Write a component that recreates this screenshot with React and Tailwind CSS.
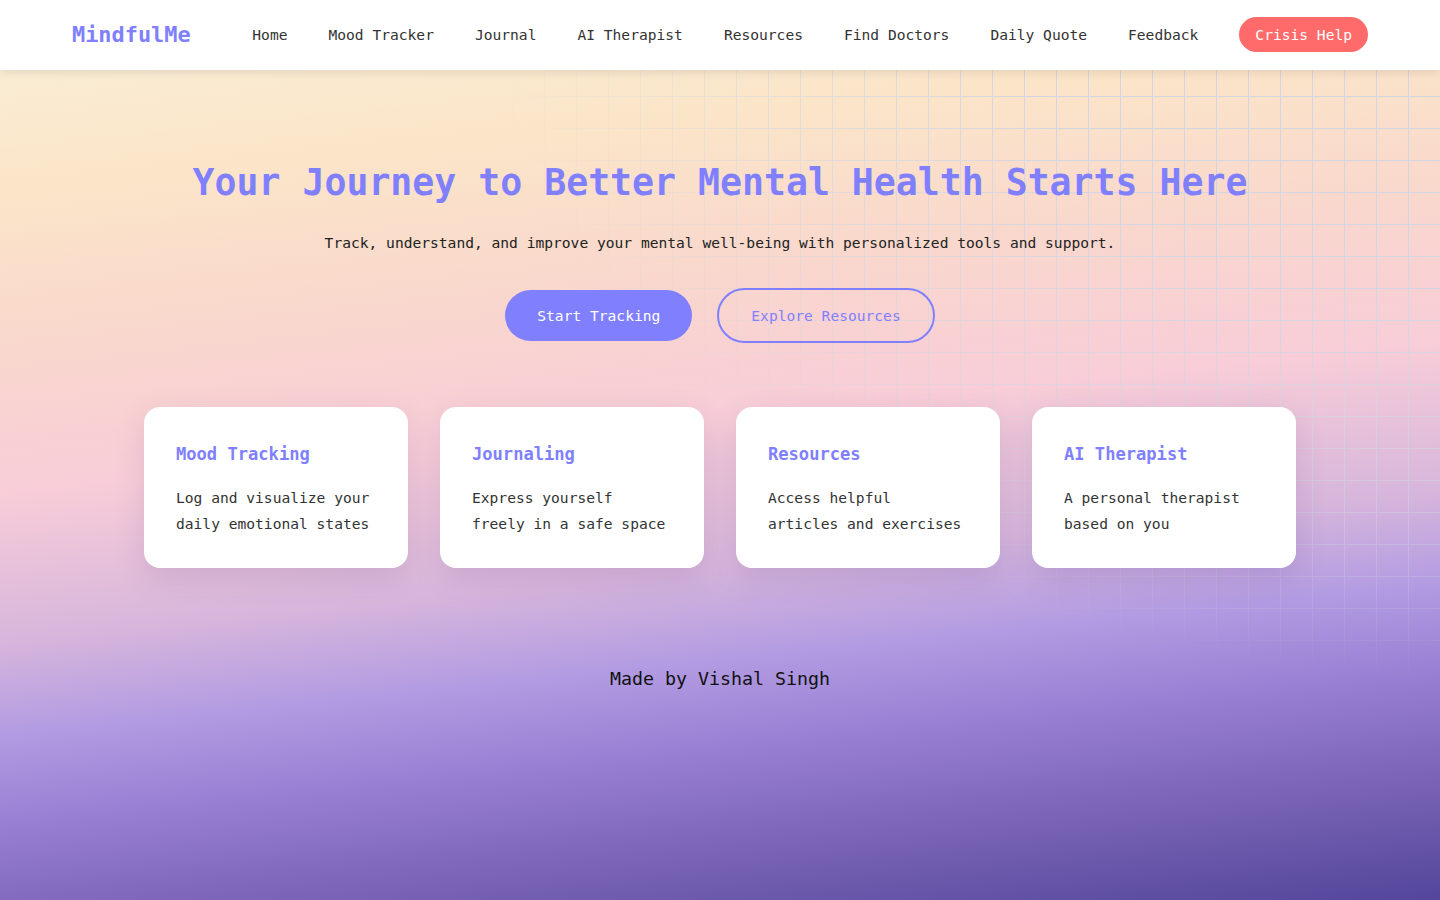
import React from 'react';

const navLinks = ['Home', 'Mood Tracker', 'Journal', 'AI Therapist', 'Resources', 'Find Doctors', 'Daily Quote', 'Feedback'];

const features = [
  { title: 'Mood Tracking', lines: ['Log and visualize your', 'daily emotional states'] },
  { title: 'Journaling', lines: ['Express yourself', 'freely in a safe space'] },
  { title: 'Resources', lines: ['Access helpful', 'articles and exercises'] },
  { title: 'AI Therapist', lines: ['A personal therapist', 'based on you'] },
];

const App = () => {
  return (
    <div className="relative min-h-screen overflow-hidden font-['DejaVu_Sans_Mono',monospace] bg-[linear-gradient(174deg,#f8f1da_0%,#fbe5c8_18%,#f9d7cd_33%,#f8cdd8_47%,#d7b6dc_61%,#b29be2_70%,#977dd2_79%,#7b65b8_88%,#53469a_100%)]">
      {/* grid overlay, fades out from the top right */}
      <div className="pointer-events-none absolute inset-0 bg-[linear-gradient(to_right,#d2d6e2_1px,transparent_1px),linear-gradient(to_bottom,#d2d6e2_1px,transparent_1px)] bg-[size:32px_32px] [mask-image:radial-gradient(ellipse_960px_680px_at_100%_0%,#000_45%,transparent_100%)]" />

      {/* Navbar */}
      <nav className="relative z-10 flex h-[70px] items-center justify-between bg-white px-[72px] shadow-[0_2px_10px_rgba(0,0,0,0.1)]">
        <div className="text-[21.9px] font-bold leading-[26px] text-[#8080ff]">MindfulMe</div>
        <div className="flex items-center gap-[41px] text-[14.6px] text-[#333]">
          {navLinks.map((link) => (
            <a key={link} href="#" className="-mt-[2px] leading-[19px]">{link}</a>
          ))}
          <button className="-mt-[2px] rounded-full bg-[#ff6b6b] px-4 py-2 leading-[19px] text-white">Crisis Help</button>
        </div>
      </nav>

      {/* Hero */}
      <main className="relative z-10 flex flex-col items-center pt-[91px] text-center">
        <h1 className="text-[36.5px] font-bold leading-[44px] text-[#8080ff]">
          Your Journey to Better Mental Health Starts Here
        </h1>
        <p className="mt-[26px] text-[14.6px] leading-[24px] text-[#222]">
          Track, understand, and improve your mental well-being with personalized tools and support.
        </p>

        <div className="mt-[33px] flex items-center gap-[25px] text-[14.6px]">
          <button className="rounded-full bg-[#8080ff] px-8 py-4 leading-[19px] text-white">Start Tracking</button>
          <button className="rounded-full border-2 border-[#8080ff] px-8 py-4 leading-[19px] text-[#8080ff]">Explore Resources</button>
        </div>

        {/* Feature cards */}
        <div className="mt-[64px] grid w-[1152px] grid-cols-4 gap-8 text-left">
          {features.map((f) => (
            <div key={f.title} className="rounded-2xl bg-white px-8 pt-8 pb-[31px] shadow-[0_10px_30px_rgba(90,60,120,0.15)]">
              <h3 className="mb-[16px] text-[17.1px] font-bold leading-[30px] text-[#8080ff]">{f.title}</h3>
              <p className="text-[14.6px] leading-[26px] text-[#333]">
                {f.lines[0]}
                <br />
                {f.lines[1]}
              </p>
            </div>
          ))}
        </div>

        <footer className="mt-[100px] text-[18.3px] leading-[22px] text-[#111]">Made by Vishal Singh</footer>
      </main>
    </div>
  );
};

export default App;
